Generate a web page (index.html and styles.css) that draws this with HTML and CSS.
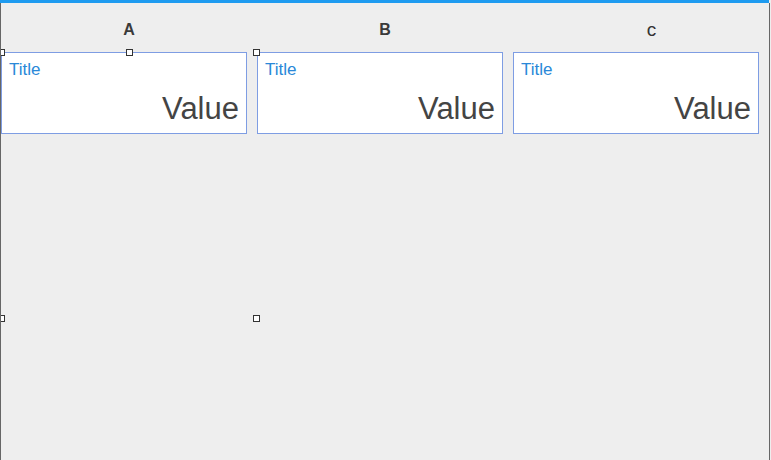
FILE: index.html
```html
<!DOCTYPE html>
<html>
<head>
<meta charset="utf-8">
<link rel="stylesheet" href="styles.css">
</head>
<body>
<div class="topbar"></div>
<div class="frame">
  <div class="grid">
    <div class="col">
      <div class="head">A</div>
      <div class="card"><div class="title">Title</div><div class="value">Value</div></div>
    </div>
    <div class="col">
      <div class="head">B</div>
      <div class="card"><div class="title">Title</div><div class="value">Value</div></div>
    </div>
    <div class="col">
      <div class="head head-c">c</div>
      <div class="card"><div class="title">Title</div><div class="value">Value</div></div>
    </div>
  </div>
  <div class="selection">
    <span class="handle h-tl"></span>
    <span class="handle h-tm"></span>
    <span class="handle h-tr"></span>
    <span class="handle h-ml"></span>
    <span class="handle h-mr"></span>
  </div>
</div>
</body>
</html>
```
FILE: styles.css
```css
html, body {
  margin: 0;
  padding: 0;
  background: #eeeeee;
  font-family: "Liberation Sans", Arial, sans-serif;
  overflow: hidden;
}
.topbar {
  height: 3px;
  width: 769px;
  background: #1e9bf0;
}
.frame {
  position: relative;
  width: 768px;
  height: 457px;
  border-left: 1px solid #666;
  border-right: 1px solid #666;
  background: #eeeeee;
  overflow: hidden;
}
.grid {
  display: grid;
  grid-template-columns: 256px 256px 256px;
}
.col {
  padding-right: 10px;
}
.head {
  padding: 18px 0 13px 10px;
  height: 18px;
  line-height: 18px;
  font-size: 16px;
  font-weight: bold;
  color: #3a3a3a;
  text-align: center;
}
.head-c {
  padding-left: 31px;
  font-weight: normal;
  font-size: 19px;
  color: #333;
}
.card {
  box-sizing: border-box;
  height: 82px;
  background: #ffffff;
  border: 1px solid #7e9de3;
  padding: 8px 7px 0 7px;
  display: flex;
  flex-direction: column;
}
.title {
  font-size: 17px;
  line-height: 18px;
  color: #2a88d8;
}
.value {
  margin-top: 13px;
  font-size: 31px;
  line-height: 34px;
  color: #444444;
  text-align: right;
}
.selection {
  position: absolute;
  left: 1px;
  top: 49px;
  width: 254px;
  height: 400px;
}
.handle {
  position: absolute;
  box-sizing: border-box;
  width: 7px;
  height: 7px;
  border: 1px solid #333;
  background: #fff;
}
.h-tl { left: -4px; top: -3px; }
.h-tm { left: 124px; top: -3px; }
.h-tr { left: 251px; top: -3px; }
.h-ml { left: -4px; top: 263px; }
.h-mr { left: 251px; top: 263px; }
```
